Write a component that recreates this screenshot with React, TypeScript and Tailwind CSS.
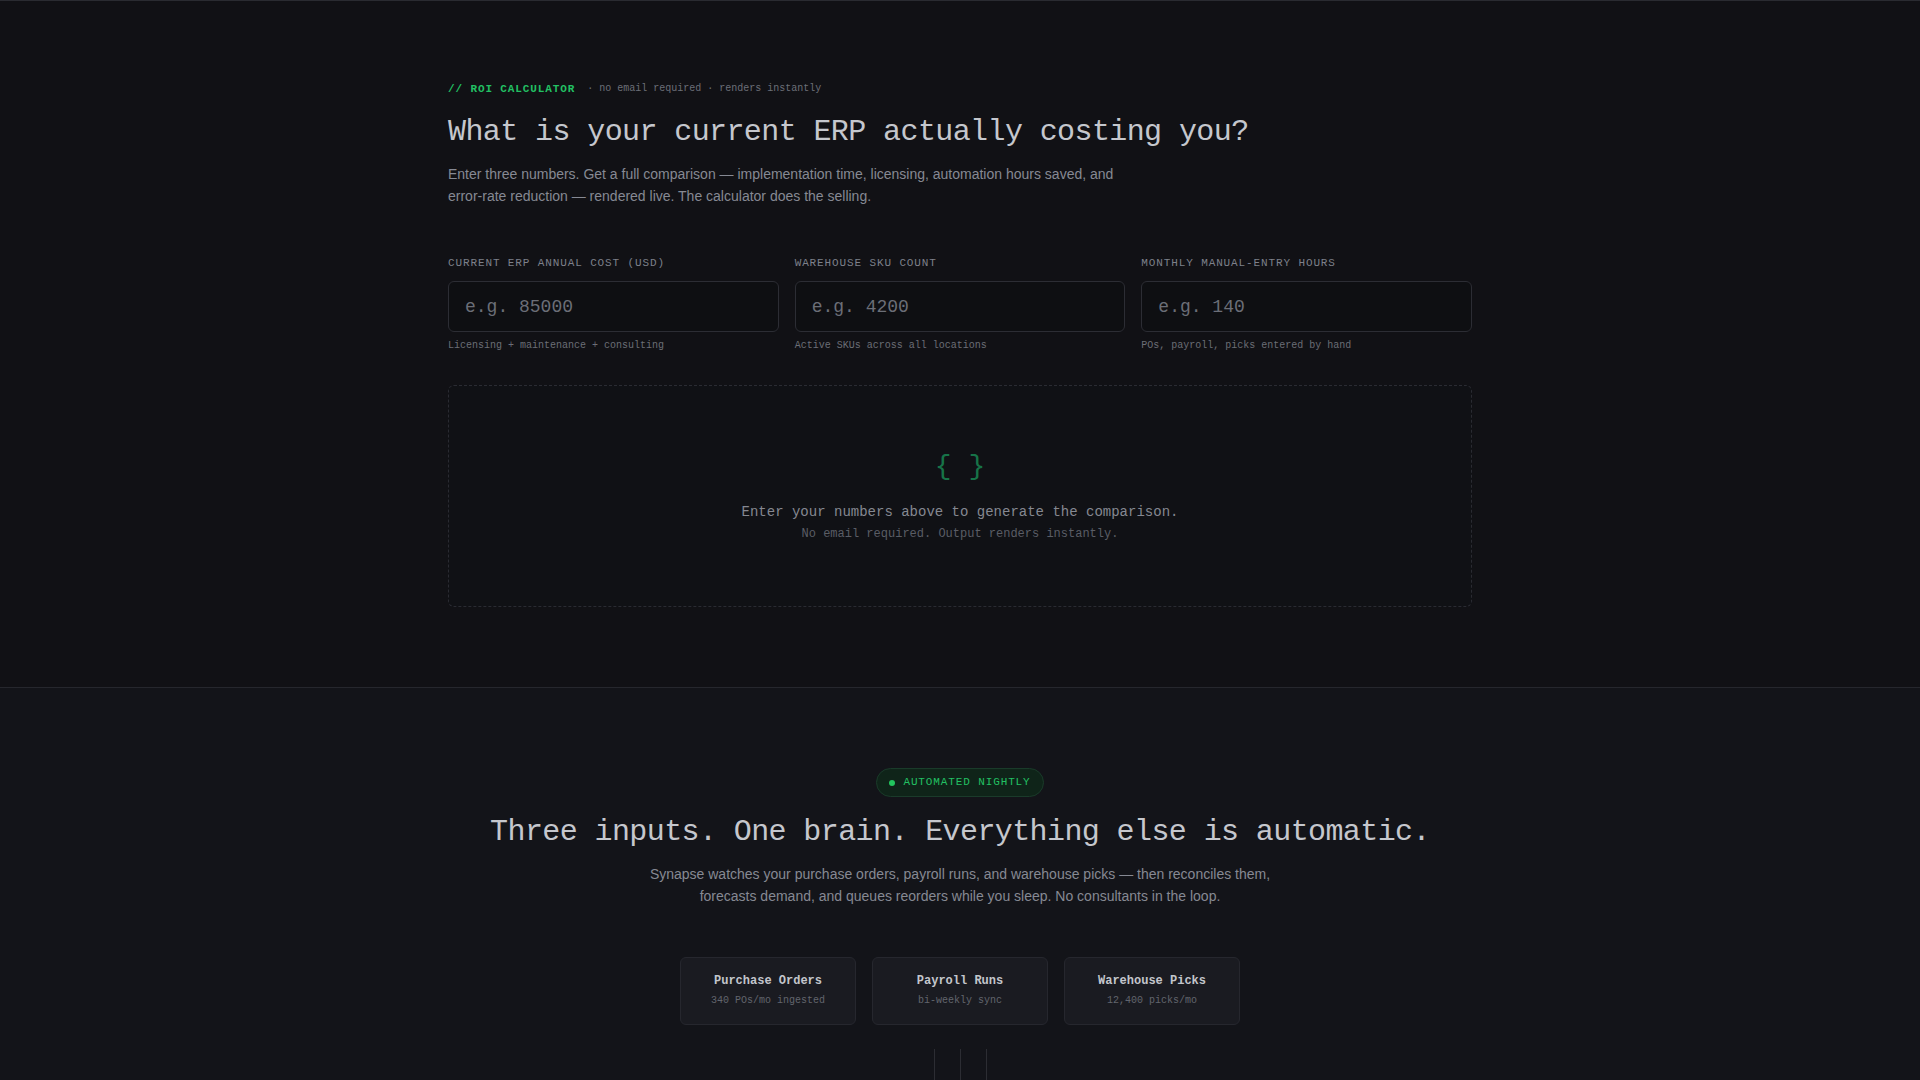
const mono = { fontFamily: '"Liberation Mono", "DejaVu Sans Mono", monospace' };
const sans = { fontFamily: '"Liberation Sans", Arial, sans-serif' };

const fields = [
  { label: 'Current ERP annual cost (USD)', placeholder: 'e.g. 85000', hint: 'Licensing + maintenance + consulting' },
  { label: 'Warehouse SKU count', placeholder: 'e.g. 4200', hint: 'Active SKUs across all locations' },
  { label: 'Monthly manual-entry hours', placeholder: 'e.g. 140', hint: 'POs, payroll, picks entered by hand' },
];

const sources = [
  { title: 'Purchase Orders', sub: '340 POs/mo ingested' },
  { title: 'Payroll Runs', sub: 'bi-weekly sync' },
  { title: 'Warehouse Picks', sub: '12,400 picks/mo' },
];

function RoiCalculator() {
  return (
    <section className="border-t border-[#2a2b31] bg-[#111115] pt-20 pb-20">
      <div className="mx-auto max-w-5xl">
        {/* Eyebrow */}
        <div className="flex items-center gap-3 leading-4" style={mono}>
          <span className="text-[11px] font-bold tracking-[0.08em] text-[#22c063]">// ROI CALCULATOR</span>
          <span className="text-[10px] text-[#6c6f78]">· no email required · renders instantly</span>
        </div>

        <h1 className="mt-4 text-[30px] leading-[38px] tracking-[-0.02em] text-[#c5c7cd]" style={mono}>
          What is your current ERP actually costing you?
        </h1>
        <p className="mt-3 max-w-2xl text-[14px] leading-[22px] text-[#868993]" style={sans}>
          Enter three numbers. Get a full comparison — implementation time, licensing, automation hours saved, and
          error-rate reduction — rendered live. The calculator does the selling.
        </p>

        {/* Inputs */}
        <div className="mt-12 grid grid-cols-3 gap-4" style={mono}>
          {fields.map((f) => (
            <label key={f.label} className="flex flex-col">
              <span className="mb-2.5 text-[11px] uppercase leading-4 tracking-[0.08em] text-[#7d808a]">{f.label}</span>
              <input
                type="text"
                placeholder={f.placeholder}
                className="h-[51px] rounded-md border border-[#2c2d34] bg-[#0e0f12] px-4 text-[18px] text-[#cdd0d6] placeholder:text-[#6b6e77] outline-none"
                style={mono}
              />
              <span className="mt-1.5 text-[10px] leading-[15px] text-[#6b6e76]">{f.hint}</span>
            </label>
          ))}
        </div>

        {/* Empty result state */}
        <div
          className="mt-8 flex h-[222px] flex-col items-center justify-center rounded-md border border-dashed border-[#2a2b32] bg-[#101115]"
          style={mono}
        >
          <div className="text-[28px] leading-8 text-[#177348]">{'{ }'}</div>
          <p className="mt-[19px] text-[14px] leading-5 text-[#858891]">Enter your numbers above to generate the comparison.</p>
          <p className="mt-1 text-[12px] leading-4 text-[#5a5d65]">No email required. Output renders instantly.</p>
        </div>
      </div>
    </section>
  );
}

function Automation() {
  return (
    <section className="border-t border-[#26272d] bg-[#131419] pt-20">
      <div className="mx-auto flex max-w-5xl flex-col items-center text-center">
        <div
          className="flex h-[29px] items-center gap-2 rounded-full border border-[#1a3b2a] bg-[#0f2419] px-3 text-[11px] tracking-[0.08em] text-[#22c063]"
          style={mono}
        >
          <span className="h-1.5 w-1.5 rounded-full bg-[#22c55e]" />
          AUTOMATED NIGHTLY
        </div>

        <h2 className="mt-4 text-[30px] leading-[38px] tracking-[-0.02em] text-[#c5c7cd]" style={mono}>
          Three inputs. One brain. Everything else is automatic.
        </h2>
        <p className="mt-3 max-w-2xl text-[14px] leading-[22px] text-[#868993]" style={sans}>
          Synapse watches your purchase orders, payroll runs, and warehouse picks — then reconciles them,
          forecasts demand, and queues reorders while you sleep. No consultants in the loop.
        </p>

        {/* Data sources */}
        <div className="mt-[50px] flex gap-4" style={mono}>
          {sources.map((s) => (
            <div
              key={s.title}
              className="flex h-[68px] w-44 flex-col items-center justify-center rounded-md border border-[#26272e] bg-[#1a1b21]"
            >
              <div className="text-[12px] font-bold leading-4 text-[#c3c6cc]">{s.title}</div>
              <div className="mt-1 text-[10px] leading-4 text-[#62656d]">{s.sub}</div>
            </div>
          ))}
        </div>

        {/* Feed lines into the engine */}
        <div className="mt-6 flex h-[40px] gap-[25px]">
          <span className="w-px bg-[#2c2d33]" />
          <span className="w-px bg-[#2c2d33]" />
          <span className="w-px bg-[#2c2d33]" />
        </div>
      </div>
    </section>
  );
}

export default function App() {
  return (
    <div className="min-h-screen bg-[#131419]">
      <RoiCalculator />
      <Automation />
    </div>
  );
}
